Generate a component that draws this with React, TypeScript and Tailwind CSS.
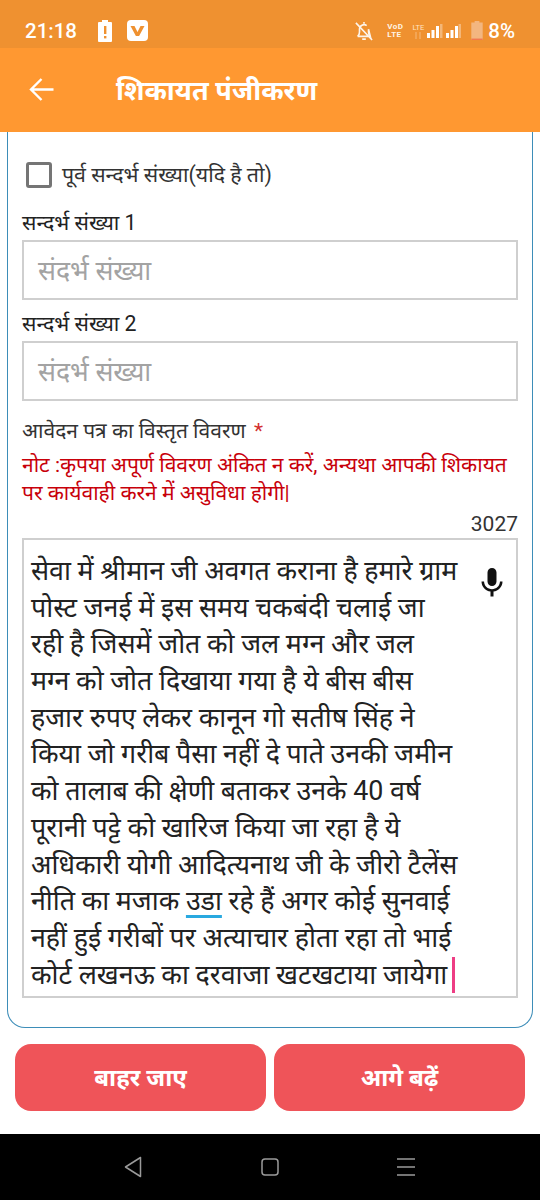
import React from 'react';

const FONT = "font-['Roboto','Noto_Sans','Noto_Sans_Devanagari','Liberation_Sans',sans-serif]";

const LINES_BEFORE = [
  'सेवा में श्रीमान जी अवगत कराना है हमारे ग्राम',
  'पोस्ट जनई में इस समय चकबंदी चलाई जा',
  'रही है जिसमें जोत को जल मग्न और जल',
  'मग्न को जोत दिखाया गया है ये बीस बीस',
  'हजार रुपए लेकर कानून गो सतीष सिंह ने',
  'किया जो गरीब पैसा नहीं दे पाते उनकी जमीन',
  'को तालाब की क्षेणी बताकर उनके 40 वर्ष',
  'पूरानी पट्टे को खारिज किया जा रहा है ये',
  'अधिकारी योगी आदित्यनाथ जी के जीरो टैलेंस',
];

function StatusBar() {
  return (
    <div className="flex h-12 items-center bg-[#ef9130] pl-[25px] pr-[25px] pt-[14px] text-white">
      <span className="text-[20.500px] font-medium">21:18</span>
      <svg className="ml-[21px]" width="14" height="22" viewBox="0 0 14 22">
        <path d="M4 0h6v2h3a1 1 0 0 1 1 1v18a1 1 0 0 1-1 1H1a1 1 0 0 1-1-1V3a1 1 0 0 1 1-1h3z" fill="#fff" />
        <rect x="6" y="6" width="2.400" height="8" fill="#ef9130" />
        <rect x="6" y="16" width="2.400" height="2.400" fill="#ef9130" />
      </svg>
      <svg className="ml-[15px]" width="21" height="21" viewBox="0 0 21 21">
        <rect width="21" height="21" rx="4" fill="#fff" />
        <path d="M3.500 6h4l3 6 3-6h4l-5.400 10h-3.200z" fill="#ef9130" />
      </svg>
      <div className="ml-auto flex items-center">
        <svg width="18" height="20" viewBox="0 0 20 22" fill="none" stroke="#fff" strokeWidth="1.800" opacity="0.9">
          <path d="M3 17c1.500-1.500 2-3 2-5V9a5 5 0 0 1 8-4M15 9v3c0 2 .6 3.500 2 5z" />
          <path d="M3 17h14M8 20h4M10 1v2M1 2l18 19" />
        </svg>
        <span className="ml-[14px] flex flex-col text-[8px] font-bold leading-[8px] tracking-[0.5px] text-[#fff4e4]">
          <span>VoD</span>
          <span>LTE</span>
        </span>
        <div className="ml-[9px] flex flex-col items-start">
          <span className="text-[7.500px] leading-[9px] text-[#ffe3c0]">LTE</span>
          <svg className="ml-[2px]" width="8" height="7" viewBox="0 0 8 7" stroke="#ffe3c0" strokeWidth="1" opacity="0.5">
            <path d="M2 0v7M6 0v7" />
          </svg>
        </div>
        <svg className="ml-[3px]" width="34" height="16" viewBox="0 0 34 16" fill="#fff">
          <rect x="0" y="10" width="3" height="5" />
          <rect x="4.500" y="7" width="3" height="8" />
          <rect x="9" y="3" width="3" height="12" />
          <rect x="13" y="1" width="2.500" height="14" opacity="0.35" />
          <rect x="19" y="10" width="3" height="5" />
          <rect x="23.500" y="7" width="3" height="8" />
          <rect x="28" y="3" width="3" height="12" />
          <rect x="31.500" y="1" width="2.500" height="14" opacity="0.35" />
        </svg>
        <svg className="ml-[10px]" width="12" height="19" viewBox="0 0 12 20">
          <path d="M3.500 0h5v1.500H12V20H0V1.500h3.500z" fill="#f3b680" />
          <rect y="18.500" width="12" height="1.500" fill="#f2784f" />
        </svg>
        <span className="ml-[5px] text-[20.500px] font-medium">8%</span>
      </div>
    </div>
  );
}

function AppBar() {
  return (
    <div className="flex h-[84px] items-center bg-[#ff9831] text-white">
      <svg className="ml-[29px]" width="25" height="25" viewBox="0 0 25 25" fill="none" stroke="#fff" strokeWidth="2.400">
        <path d="M24.500 12.500H2M12.500 2 2 12.500 12.500 23" />
      </svg>
      <span className="ml-[62px] pt-[4px] text-[27px] font-bold leading-none">शिकायत पंजीकरण</span>
    </div>
  );
}

function RefField({ label }: { label: string }) {
  return (
    <div>
      <label className="block h-[33px] text-[21.300px] leading-[31px] text-[#222]">{label}</label>
      <div className="flex h-[60px] items-center border-2 border-[#cfcfcf] px-[14px] pt-[3px] text-[26.600px] text-[#a3a3a3]">
        संदर्भ संख्या
      </div>
    </div>
  );
}

export default function App() {
  return (
    <div className={`${FONT} flex h-[1200px] w-[540px] flex-col overflow-hidden bg-white`}>
      <StatusBar />
      <AppBar />

      <div className="mx-[7px] h-[897px] rounded-b-[18px] border border-t-0 border-[#3d8db8] px-[14px]">
        <div className="flex items-center pt-[28px]">
          <span className="ml-[4px] h-[26px] w-[26px] rounded-[3px] border-[3px] border-[#757575]" />
          <span className="ml-[10px] text-[21.300px] leading-[30px] text-[#333]">पूर्व सन्दर्भ संख्या(यदि है तो)</span>
        </div>
        <div className="mt-[17px] flex flex-col gap-[8px]">
          <RefField label="सन्दर्भ संख्या 1" />
          <RefField label="सन्दर्भ संख्या 2" />
        </div>

        <div className="mt-[14px] text-[21px] leading-[32px] text-[#333]">
          आवेदन पत्र का विस्तृत विवरण <span className="ml-[3px] text-[#d32f2f]">*</span>
        </div>
        <p className="mt-[4px] text-[21px] leading-[28px] text-[#c8000a]">
          नोट :कृपया अपूर्ण विवरण अंकित न करें, अन्यथा आपकी शिकायत
          <br />
          पर कार्यवाही करने में असुविधा होगी|
        </p>
        <div className="mt-[4px] text-right text-[21px] leading-[27px] text-[#333]">3027</div>

        <div className="relative h-[460px] border-2 border-[#cfcfcf] pl-[7px] pt-[13px] text-[26.800px] leading-[36.700px] whitespace-nowrap text-[#222]">
          {LINES_BEFORE.map((line) => (
            <div key={line}>{line}</div>
          ))}
          <div>
            नीति का मजाक <span className="underline decoration-[#29a9e0] decoration-[3px] underline-offset-[5px]">उडा</span> रहे हैं अगर कोई सुनवाई
          </div>
          <div>नहीं हुई गरीबों पर अत्याचार होता रहा तो भाई</div>
          <div className="flex items-center">
            कोर्ट लखनऊ का दरवाजा खटखटाया जायेगा
            <span className="ml-[5px] h-[36px] w-[3px] bg-[#ee3d84]" />
          </div>
          <svg className="absolute right-[6px] top-[25px]" width="36" height="36" viewBox="0 0 24 24" fill="#111">
            <path d="M12 14c1.660 0 2.990-1.340 2.990-3L15 5c0-1.660-1.340-3-3-3S9 3.340 9 5v6c0 1.660 1.340 3 3 3zm5.300-3c0 3-2.540 5.100-5.300 5.100S6.700 14 6.700 11H5c0 3.410 2.720 6.230 6 6.720V21h2v-3.280c3.280-.48 6-3.300 6-6.720h-1.700z" />
          </svg>
        </div>
      </div>

      <div className="flex gap-2 px-[15px] pt-[16px]">
        <button className="h-[67px] flex-1 rounded-[16px] bg-[#ef5459] text-[24px] font-bold text-white">बाहर जाए</button>
        <button className="h-[67px] flex-1 rounded-[16px] bg-[#ef5459] text-[24px] font-bold text-white">आगे बढ़ें</button>
      </div>

      <div className="mt-[23px] flex h-[66px] items-center bg-black">
        <svg className="ml-[124px]" width="18" height="22" viewBox="0 0 18 22" fill="none" stroke="#9a9a9a" strokeWidth="1.500" strokeLinejoin="round">
          <path d="M16.500 1.500v19L1.500 11z" />
        </svg>
        <svg className="ml-[119px]" width="18" height="18" viewBox="0 0 18 18" fill="none" stroke="#9a9a9a" strokeWidth="1.500">
          <rect x="1" y="1" width="16" height="16" rx="3" />
        </svg>
        <svg className="ml-[118px]" width="18" height="18" viewBox="0 0 18 18" fill="none" stroke="#9a9a9a" strokeWidth="1.500">
          <path d="M0 1h18M0 9h18M0 17h18" />
        </svg>
      </div>
    </div>
  );
}
